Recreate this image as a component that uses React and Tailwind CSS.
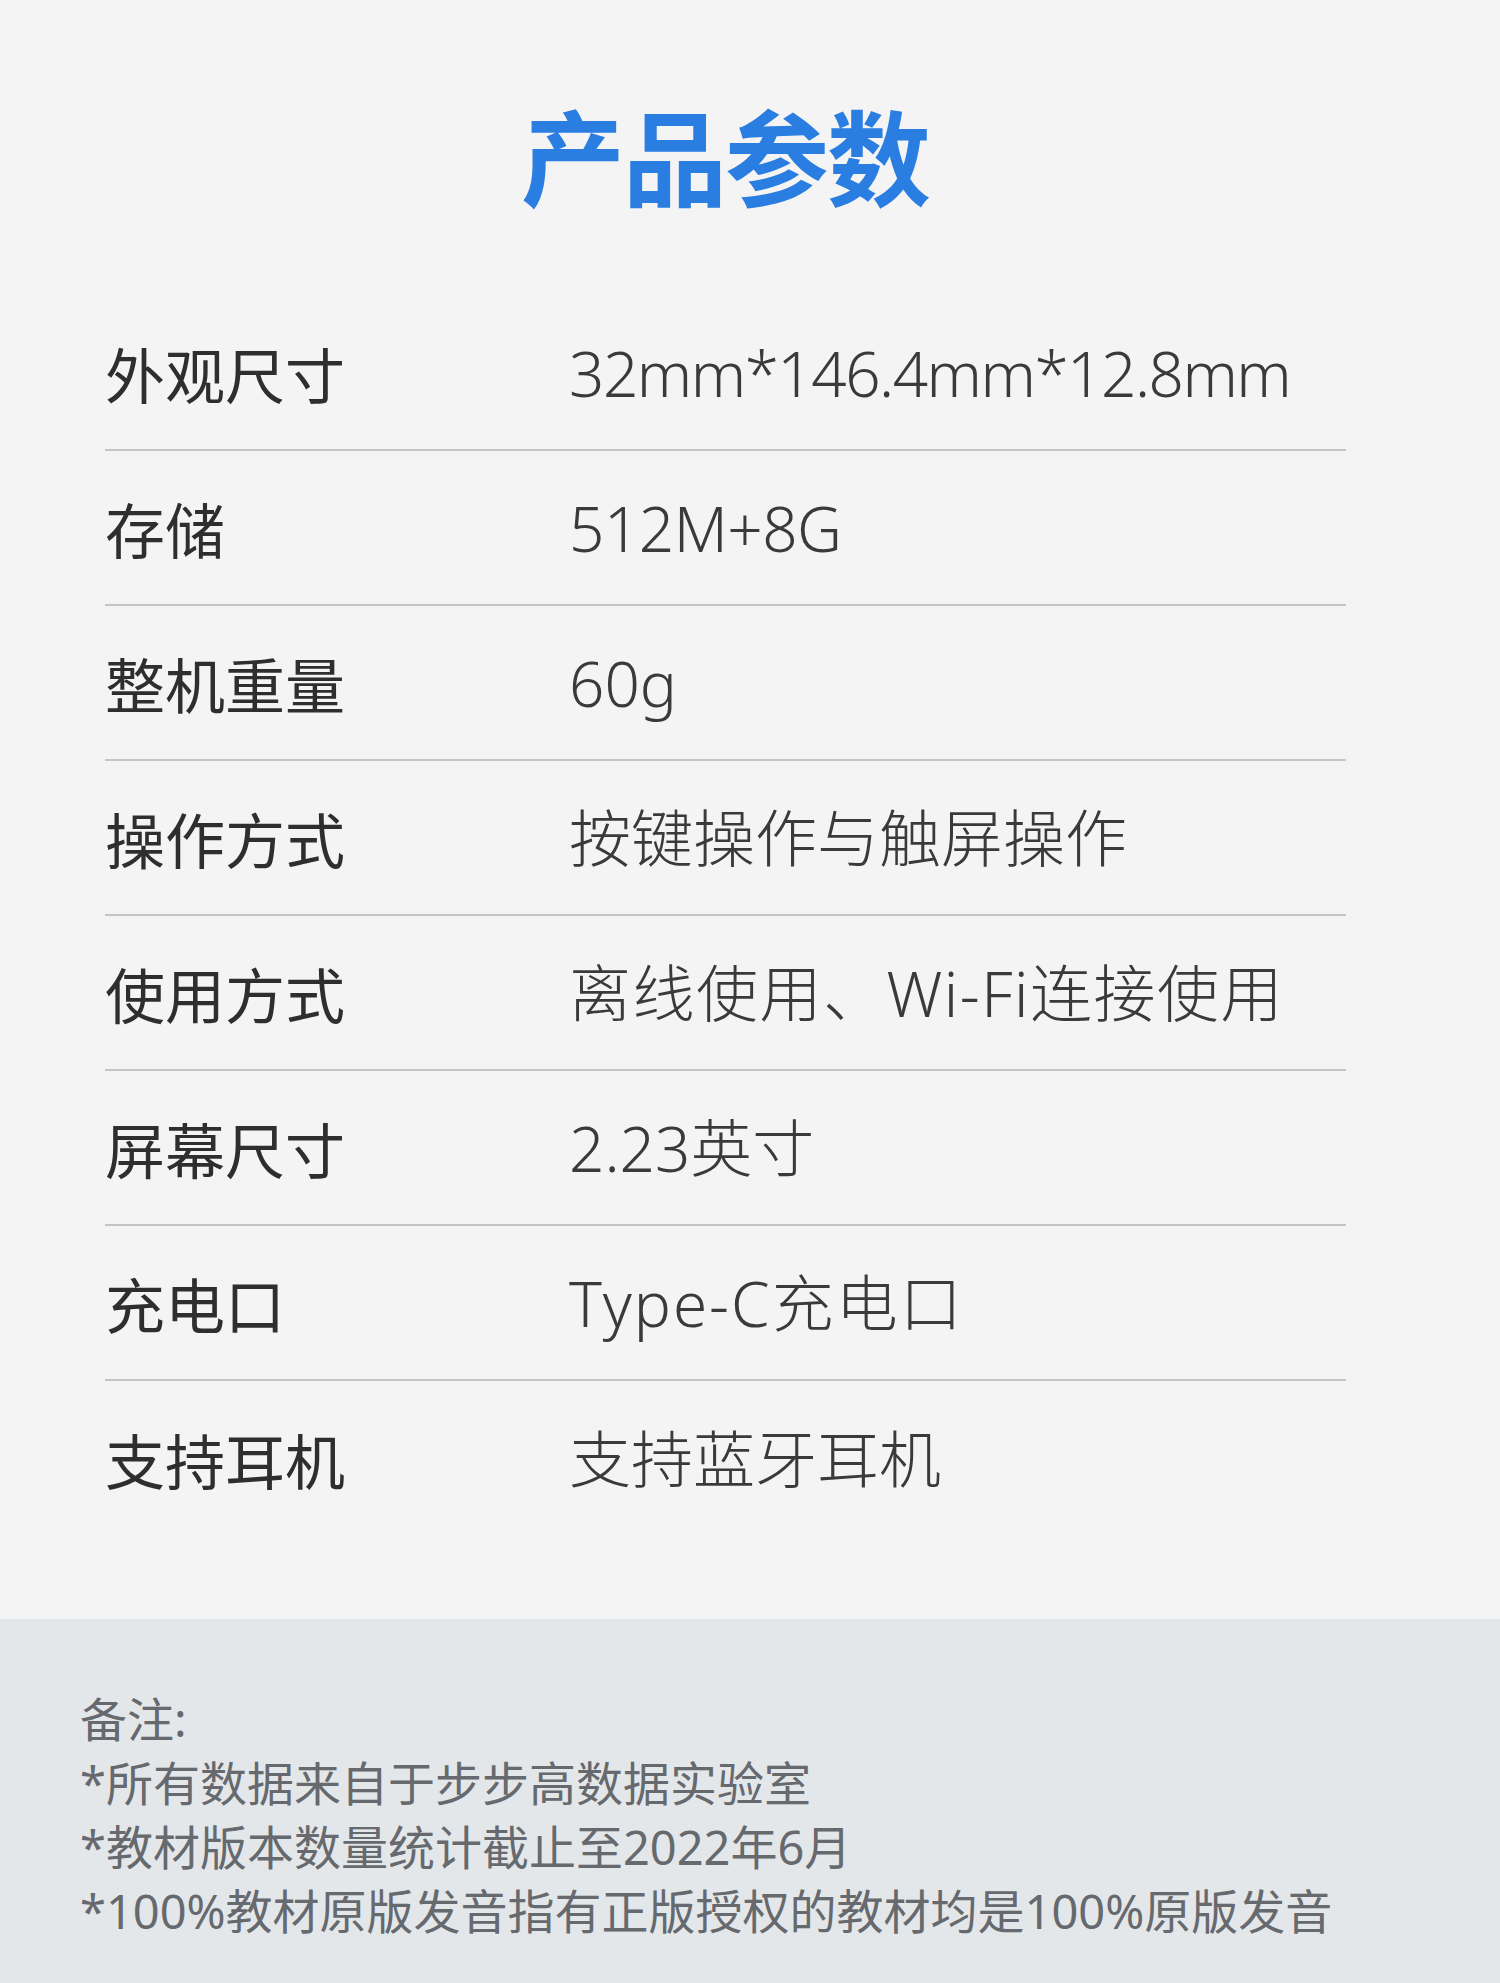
const specs = [
  { label: "外观尺寸", value: "32mm*146.4mm*12.8mm", track: "tracking-[-1.5px]" },
  { label: "存储", value: "512M+8G", track: "tracking-[-0.5px]" },
  { label: "整机重量", value: "60g", track: "tracking-normal" },
  { label: "操作方式", value: "按键操作与触屏操作", track: "tracking-normal" },
  { label: "使用方式", value: "离线使用、Wi-Fi连接使用", track: "tracking-[1.5px]" },
  { label: "屏幕尺寸", value: "2.23英寸", track: "tracking-normal" },
  { label: "充电口", value: "Type-C充电口", track: "tracking-[2px]" },
  { label: "支持耳机", value: "支持蓝牙耳机", track: "tracking-normal" },
];

const notes = [
  "备注:",
  "*所有数据来自于步步高数据实验室",
  "*教材版本数量统计截止至2022年6月",
  "*100%教材原版发音指有正版授权的教材均是100%原版发音",
];

export default function App() {
  return (
    <div className="w-[1500px] min-h-[1983px] bg-[#f4f4f4] flex flex-col font-['Noto_Sans','Noto_Sans_CJK_SC',sans-serif]">
      {/* Title */}
      <div className="h-[296px] flex justify-center pt-[88px] pr-[50px]">
        <h1 className="text-[104px] leading-[132px] font-bold text-[#2a7de1] tracking-[-2px] font-['Noto_Sans_CJK_SC',sans-serif]">
          产品参数
        </h1>
      </div>

      {/* Spec rows */}
      <div className="ml-[105px] w-[1241px]">
        {specs.map((s, i) => (
          <div
            key={s.label}
            className={
              "h-[155px] flex items-center pt-[1px] " +
              (i < specs.length - 1 ? "border-b-2 border-[#c4c4c4]" : "")
            }
          >
            <div className="w-[464px] shrink-0 text-[60px] text-[#2e2e2e] font-['Noto_Sans_CJK_SC',sans-serif]">
              {s.label}
            </div>
            <div className={"text-[62px] font-light text-[#3a3a3a] " + s.track}>
              {s.value}
            </div>
          </div>
        ))}
      </div>

      {/* Notes */}
      <div className="mt-[83px] flex-1 bg-[#e4e7ea] pl-[80px] pt-[68px] pb-[40px]">
        {notes.map((n) => (
          <p key={n} className="text-[47px] leading-[64px] text-[#66696d]">
            {n}
          </p>
        ))}
      </div>
    </div>
  );
}
